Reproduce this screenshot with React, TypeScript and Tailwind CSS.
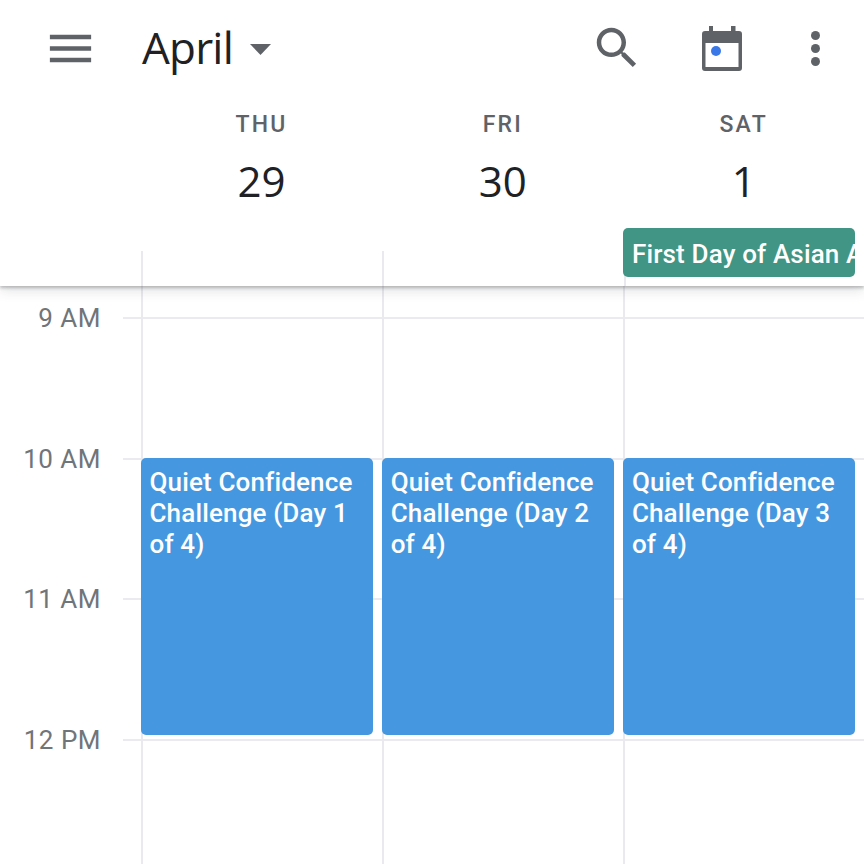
const days = [
  { name: 'THU', date: '29', day: 1 },
  { name: 'FRI', date: '30', day: 2 },
  { name: 'SAT', date: '1', day: 3 },
]

const hours = ['9 AM', '10 AM', '11 AM', '12 PM']

function Toolbar() {
  return (
    <div className="flex h-[96px] items-center text-[#5f6368]">
      <svg viewBox="0 0 24 24" className="ml-[43px] h-[55px] w-[55px] fill-current">
        <path d="M3 18h18v-2H3v2zm0-5h18v-2H3v2zm0-7v2h18V6H3z" />
      </svg>
      <div className="ml-[44px] -mt-[3px] text-[44px] leading-none tracking-[-0.8px] text-[#202124] font-['Open_Sans',sans-serif]">April</div>
      <svg viewBox="0 0 21 11" className="ml-[17px] mt-[2px] h-[11px] w-[21px] fill-current">
        <path d="M0 0h21L10.5 11z" />
      </svg>
      <svg viewBox="0 0 24 24" className="ml-[319px] h-[54px] w-[54px] fill-current">
        <path d="M15.5 14h-.79l-.28-.27C15.41 12.59 16 11.11 16 9.5 16 5.91 13.09 3 9.5 3S3 5.91 3 9.5 5.91 16 9.5 16c1.61 0 3.09-.59 4.23-1.57l.27.28v.79l5 4.99L20.49 19l-4.99-5zm-6 0C7.01 14 5 11.99 5 9.5S7.01 5 9.5 5 14 7.01 14 9.5 11.99 14 9.5 14z" />
      </svg>
      <svg viewBox="0 0 40 45" className="ml-[58px] h-[45px] w-[40px]">
        <path
          fill="#5f6368"
          d="M7 0h4v5h18V0h4.500v5H37a3 3 0 0 1 3 3v34a3 3 0 0 1-3 3H3a3 3 0 0 1-3-3V8a3 3 0 0 1 3-3h4z"
        />
        <rect x="3.500" y="17" width="33" height="24" fill="#fff" />
        <circle cx="14" cy="25" r="5" fill="#3b78e7" />
      </svg>
      <svg viewBox="0 0 9 35" className="ml-[69px] h-[35px] w-[9px] fill-current">
        <circle cx="4.500" cy="4.500" r="4.500" />
        <circle cx="4.500" cy="17.500" r="4.500" />
        <circle cx="4.500" cy="30.500" r="4.500" />
      </svg>
    </div>
  )
}

function Header() {
  return (
    <header className="relative z-10 h-[286px] shrink-0 bg-white shadow-[0_2px_3px_rgba(60,64,67,0.3),0_4px_12px_rgba(60,64,67,0.16)]">
      <Toolbar />
      <div className="grid grid-cols-[141px_241.200px_241.200px_1fr]">
        <div />
        {days.map((d) => (
          <div key={d.name} className="flex h-[155px] flex-col items-center">
            <div className="mt-[17px] text-[23px] leading-[24px] font-medium tracking-[2.2px] text-[#5f6368]">
              {d.name}
            </div>
            <div className="mt-[21px] text-[42px] leading-[46px] text-[#202124] font-['Open_Sans',sans-serif]">
              {d.date}
            </div>
          </div>
        ))}
      </div>
      <div className="absolute bottom-0 left-[141px] h-[35px] w-[2px] bg-[#e9e9ee]" />
      <div className="absolute bottom-0 left-[382px] h-[35px] w-[2px] bg-[#e9e9ee]" />
      <div className="absolute bottom-0 left-[624px] h-[35px] w-[2px] bg-[#e9e9ee]" />
      <div className="absolute left-[623px] top-[228px] h-[49px] w-[232px] overflow-hidden rounded-[5px] bg-[#419585] pl-[9px] text-[26px] leading-[52px] font-medium tracking-[0.15px] whitespace-nowrap text-white">
        First Day of Asian American Heritage
      </div>
    </header>
  )
}

function CalendarBody() {
  return (
    <div className="relative flex-1 overflow-hidden pt-[31px]">
      {hours.map((h) => (
        <div key={h} className="flex h-[140.670px] items-start">
          <div className="w-[101px] shrink-0 -translate-y-[15px] text-right text-[26px] leading-[32px] tracking-[0.5px] text-[#70757a]">
            {h}
          </div>
          <div className="ml-[22px] h-[2px] flex-1 bg-[#ebebef]" />
        </div>
      ))}
      <div className="absolute inset-0 grid grid-cols-[141px_241.200px_241.200px_1fr]">
        <div />
        {days.map((d) => (
          <div key={d.name} className="relative border-l-2 border-[#e9e9ee]">
            <div className="absolute left-[-2px] top-[172px] h-[277px] w-[232px] rounded-[5px] bg-[#4598e0] pl-[8.500px] pr-[9px] pt-[9px] text-[26px] leading-[31px] font-medium tracking-[0.15px] text-white">
              Quiet Confidence Challenge (Day {d.day} of 4)
            </div>
          </div>
        ))}
      </div>
    </div>
  )
}

export default function App() {
  return (
    <div className="flex h-[864px] w-[864px] flex-col overflow-hidden bg-white font-['Roboto',sans-serif]">
      <Header />
      <CalendarBody />
    </div>
  )
}
